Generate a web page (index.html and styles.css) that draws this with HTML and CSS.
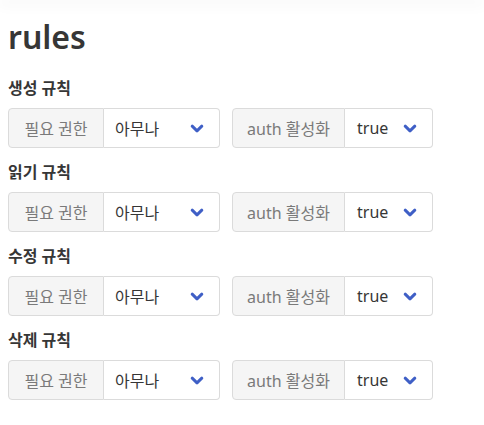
FILE: index.html
```html
<!DOCTYPE html>
<html lang="ko">
<head>
<meta charset="utf-8">
<link rel="stylesheet" href="styles.css">
</head>
<body>
<div class="topbar"></div>
<main class="content">
  <h1 class="title">rules</h1>

  <section class="rule">
    <div class="label">생성 규칙</div>
    <div class="field-row">
      <div class="group">
        <span class="addon addon-a">필요 권한</span>
        <div class="select select-a"><span>아무나</span><svg class="chev" viewBox="0 0 14 9" width="14" height="9"><polyline points="2.2,2.2 7,6.8 11.8,2.2"/></svg></div>
      </div>
      <div class="group">
        <span class="addon addon-b">auth 활성화</span>
        <div class="select select-b"><span>true</span><svg class="chev" viewBox="0 0 14 9" width="14" height="9"><polyline points="2.2,2.2 7,6.8 11.8,2.2"/></svg></div>
      </div>
    </div>
  </section>

  <section class="rule">
    <div class="label">읽기 규칙</div>
    <div class="field-row">
      <div class="group">
        <span class="addon addon-a">필요 권한</span>
        <div class="select select-a"><span>아무나</span><svg class="chev" viewBox="0 0 14 9" width="14" height="9"><polyline points="2.2,2.2 7,6.8 11.8,2.2"/></svg></div>
      </div>
      <div class="group">
        <span class="addon addon-b">auth 활성화</span>
        <div class="select select-b"><span>true</span><svg class="chev" viewBox="0 0 14 9" width="14" height="9"><polyline points="2.2,2.2 7,6.8 11.8,2.2"/></svg></div>
      </div>
    </div>
  </section>

  <section class="rule">
    <div class="label">수정 규칙</div>
    <div class="field-row">
      <div class="group">
        <span class="addon addon-a">필요 권한</span>
        <div class="select select-a"><span>아무나</span><svg class="chev" viewBox="0 0 14 9" width="14" height="9"><polyline points="2.2,2.2 7,6.8 11.8,2.2"/></svg></div>
      </div>
      <div class="group">
        <span class="addon addon-b">auth 활성화</span>
        <div class="select select-b"><span>true</span><svg class="chev" viewBox="0 0 14 9" width="14" height="9"><polyline points="2.2,2.2 7,6.8 11.8,2.2"/></svg></div>
      </div>
    </div>
  </section>

  <section class="rule">
    <div class="label">삭제 규칙</div>
    <div class="field-row">
      <div class="group">
        <span class="addon addon-a">필요 권한</span>
        <div class="select select-a"><span>아무나</span><svg class="chev" viewBox="0 0 14 9" width="14" height="9"><polyline points="2.2,2.2 7,6.8 11.8,2.2"/></svg></div>
      </div>
      <div class="group">
        <span class="addon addon-b">auth 활성화</span>
        <div class="select select-b"><span>true</span><svg class="chev" viewBox="0 0 14 9" width="14" height="9"><polyline points="2.2,2.2 7,6.8 11.8,2.2"/></svg></div>
      </div>
    </div>
  </section>
</main>
</body>
</html>
```

FILE: styles.css
```css
html, body {
  margin: 0;
  padding: 0;
  background: #ffffff;
}

body {
  font-family: "Noto Sans", "Noto Sans CJK KR", sans-serif;
  font-size: 16px;
  color: #363636;
  overflow: hidden;
}

.topbar {
  height: 0;
  box-shadow: 0 2px 14px 2px rgba(10, 10, 10, 0.07);
}

.content {
  padding: 0 8px;
}

.title {
  margin: 19px 0 21px 0;
  font-size: 32px;
  line-height: 36px;
  font-weight: 600;
  color: #363636;
}

.rule {
  margin-bottom: 12px;
}

.label {
  font-size: 16px;
  font-weight: 700;
  line-height: 24px;
  margin-bottom: 8px;
  color: #363636;
}

.field-row {
  display: flex;
  gap: 12px;
}

.group {
  display: flex;
  height: 40px;
}

.addon {
  box-sizing: border-box;
  height: 40px;
  display: flex;
  align-items: center;
  justify-content: center;
  background: #f5f5f5;
  border: 1px solid #dbdbdb;
  border-radius: 4px 0 0 4px;
  color: #7a7a7a;
  font-size: 16px;
  white-space: nowrap;
}

.addon-a { width: 96px; }
.addon-b { width: 113px; }

.select {
  box-sizing: border-box;
  height: 40px;
  display: flex;
  align-items: center;
  justify-content: space-between;
  border: 1px solid #dbdbdb;
  border-left: none;
  border-radius: 0 4px 4px 0;
  padding: 0 15px 0 11px;
  color: #363636;
  font-size: 16px;
}

.select-a { width: 116px; }
.select-b { width: 88px; padding-left: 12px; }

.chev {
  display: block;
  fill: none;
  stroke: #3f5fc6;
  stroke-width: 3;
  stroke-linecap: round;
  stroke-linejoin: round;
}
```
